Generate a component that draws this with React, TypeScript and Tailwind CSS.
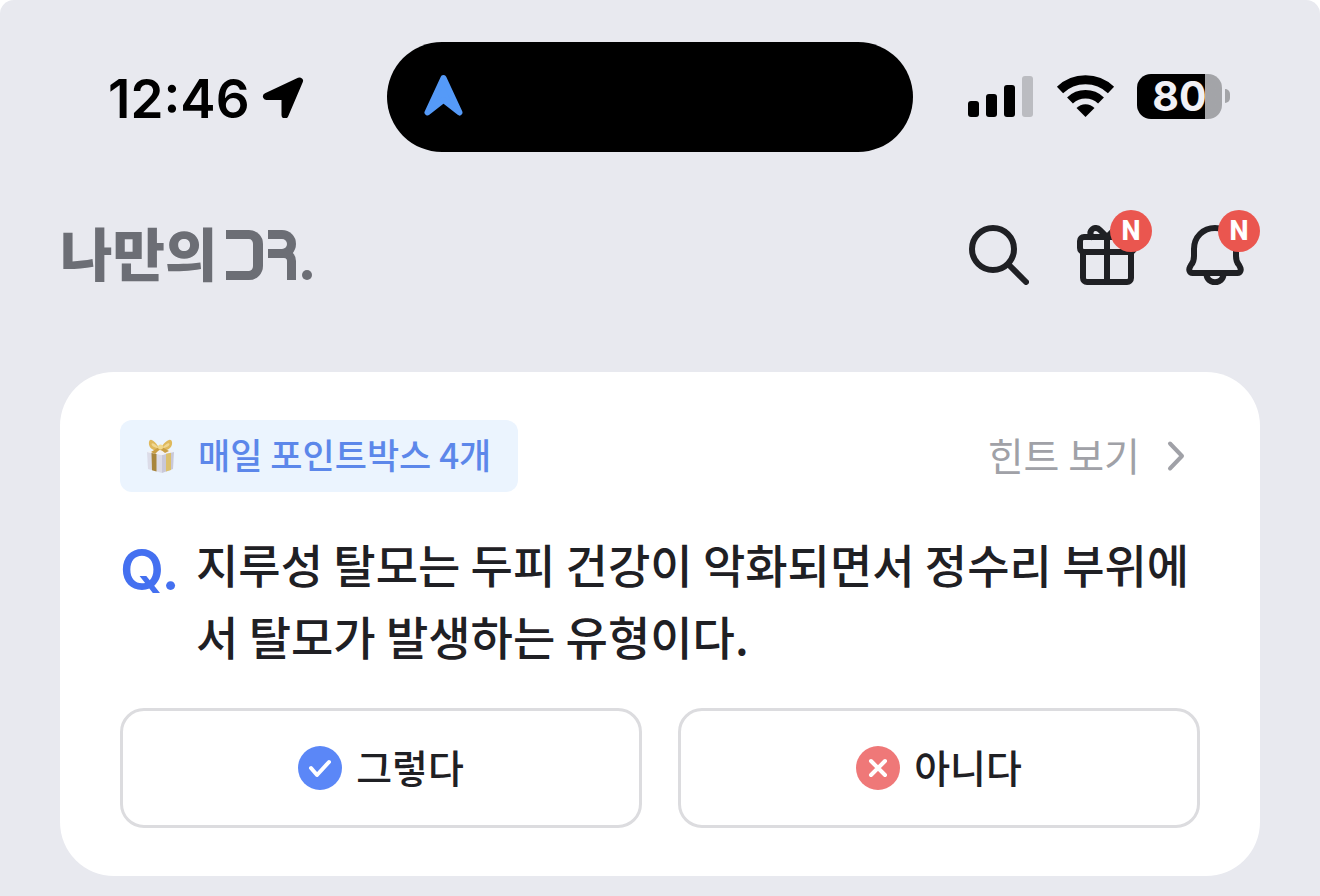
import type { ReactNode } from "react";

const signalBars = [
  { height: "h-4", color: "bg-black" },
  { height: "h-[23px]", color: "bg-black" },
  { height: "h-8", color: "bg-black" },
  { height: "h-[41px]", color: "bg-[#bbbcc1]" },
];

const StatusBar = () => (
  <div className="flex items-center pl-[108px] pr-[90px] pt-[42px] font-['Inter',sans-serif]">
    <div className="flex w-[279px] shrink-0 items-center gap-3">
      <span className="pt-1 text-[53px] leading-[60px] font-semibold text-black">12:46</span>
      <svg className="h-[42px] w-[42px]" viewBox="0 0 42 42" aria-hidden="true">
        <path
          d="M37.500 5 L4.500 20.500 L23 20.500 L23 39 Z"
          fill="#000"
          stroke="#000"
          strokeWidth="7"
          strokeLinejoin="round"
        />
      </svg>
    </div>

    {/* Dynamic island */}
    <div className="mr-[55px] flex h-[110px] grow items-center rounded-[55px] bg-black pb-1 pl-[37px]">
      <svg className="h-[42px] w-[40px]" viewBox="0 0 40 42" aria-hidden="true">
        <path
          d="M19.500 4 L3.500 38.500 L19.500 26 L35.500 38.500 Z"
          fill="#559af8"
          stroke="#559af8"
          strokeWidth="6"
          strokeLinejoin="round"
        />
      </svg>
    </div>

    <div className="flex shrink-0 items-center pb-0.5">
      <div className="flex items-end gap-[7px]">
        {signalBars.map((bar, index) => (
          <span key={index} className={`w-[11px] rounded-[3px] ${bar.height} ${bar.color}`} />
        ))}
      </div>
      <svg className="ml-[23px] h-[43px] w-[59px]" viewBox="0 0 59 43" aria-hidden="true">
        <path d="M4 15 A37 37 0 0 1 55 15" fill="none" stroke="#000" strokeWidth="9" />
        <path d="M14 25.500 A22.500 22.500 0 0 1 45 25.500" fill="none" stroke="#000" strokeWidth="8.500" />
        <path d="M20.500 33 A12.500 12.500 0 0 1 38.500 33 L29.500 42 Z" fill="#000" />
      </svg>
      <div className="ml-[22px] flex items-center gap-[3px]">
        <div className="flex h-[45px] w-[85px] items-center justify-center rounded-[14px] bg-linear-to-r from-black from-80% to-[#a3a4a8] to-80%">
          <span className="text-[41px] leading-[45px] font-bold text-[#f1f1f5]">80</span>
        </div>
        <span className="h-[14px] w-[5px] rounded-r-full bg-[#a3a4a8]" />
      </div>
    </div>
  </div>
);

const Logo = () => (
  <a href="#home" aria-label="나만의 DR." className="flex items-center text-[#6c6e75]">
    <span className="pb-2 text-[57px] leading-[52px] font-black">나만의</span>
    <span className="ml-[9px] flex h-[50px] items-stretch" aria-hidden="true">
      <span className="w-[37px] rounded-r-[14px] border-y-[9px] border-r-[10px] border-current" />
      <span className="ml-[5px] flex w-[28px] flex-col">
        <span className="h-[28px] rounded-r-[14px] border-y-[9px] border-r-[9px] border-current" />
        <span className="-mt-[9px] h-[31px] w-[28px] rounded-tr-[12px] border-t-[9px] border-r-[9px] border-current" />
      </span>
      <span className="ml-[6px] h-[10px] w-[10px] self-end rounded-full bg-current" />
    </span>
  </a>
);

type IconButtonProps = { label: string; isNew?: boolean; children: ReactNode };

const IconButton = ({ label, isNew, children }: IconButtonProps) => (
  <button type="button" aria-label={label} className="relative h-[60px] w-[60px] cursor-pointer text-[#1f2024]">
    <svg
      className="h-[60px] w-[60px]"
      viewBox="0 0 60 60"
      fill="none"
      stroke="currentColor"
      strokeWidth="6"
      strokeLinecap="round"
      strokeLinejoin="round"
    >
      {children}
    </svg>
    {isNew && (
      <span className="absolute -top-[15px] -right-[15px] flex h-[42px] w-[42px] items-center justify-center rounded-full bg-[#ea564f] font-['Roboto',sans-serif] text-[27px] leading-[42px] font-extrabold text-white">
        N
      </span>
    )}
  </button>
);

const Header = () => (
  <header className="mt-[73px] flex items-center justify-between pl-[60px] pr-[75px]">
    <Logo />
    <nav className="flex gap-12">
      <IconButton label="검색">
        <circle cx="24" cy="24" r="21" />
        <path d="M39.500 39.500 L57 57" />
      </IconButton>
      <IconButton label="선물" isNew>
        <rect x="3" y="12" width="54" height="15" rx="4" />
        <path d="M6 27 V53 a4 4 0 0 0 4 4 H50 a4 4 0 0 0 4 -4 V27" />
        <path d="M30 12 V57" />
        <path d="M30 12 L23 5 C18 0 11 5 14.500 12 M30 12 L37 5 C42 0 49 5 45.500 12" />
      </IconButton>
      <IconButton label="알림" isNew>
        <path d="M30 3 C18 3 9 12 9 24 V31 C9 35 8 38 6 40 L5 42 C3.500 44.500 4.500 48 7.500 48 H52.500 C55.500 48 56.500 44.500 55 42 L54 40 C52 38 51 35 51 31 V24 C51 12 42 3 30 3 Z" />
        <path d="M21.500 49 C22 60 38 60 38.500 49" />
      </IconButton>
    </nav>
  </header>
);

const GiftBox = () => (
  <svg className="h-9 w-[30px]" viewBox="0 0 30 36" aria-hidden="true">
    <path d="M1 14 L16 17 V35 L2 31 Z" fill="#dcdce8" />
    <path d="M16 17 L28 14 L27 31 L16 35 Z" fill="#c9c8d8" />
    <path d="M1 14 L14 10 L28 13 L16 17 Z" fill="#f3f1f2" />
    <path d="M5.500 15 L10.500 16 V33.500 L6 32.200 Z" fill="#a8853c" />
    <path d="M20 15.800 L25 14.700 V32 L20 33.500 Z" fill="#dcc06c" />
    <path d="M14 11 C9 3 4 -1 3 4 C2 10 8 14 14 12 C20 14 27 10 26 4 C25 -1 19 3 14 11 Z" fill="#dfb95c" />
    <path d="M13 10 C9 6 6 4 5.500 6 C5.500 8 9 10 13 10 M16 10 C20 6 23 4 23.500 6 C23.500 8 20 10 16 10" fill="#f0d792" />
    <path d="M13 9 L5 14 L9 16 L14 11 L19 15 L23 13 L16 9 Z" fill="#ca9f45" />
    <circle cx="14.500" cy="9" r="2.500" fill="#f1d98e" />
  </svg>
);

const QuizCard = () => (
  <main className="mx-[60px] mt-[87px] rounded-[54px] bg-white px-[60px] py-12">
    <div className="flex items-center justify-between">
      <div className="flex h-[72px] items-center gap-[22px] rounded-xl bg-[#ebf4fe] pl-[26px] pr-[27px]">
        <GiftBox />
        <span className="pb-1 text-[35px] leading-[48px] font-medium text-[#5c87ea]">매일 포인트박스 4개</span>
      </div>
      <a href="#hint" className="flex items-center gap-3 text-[39px] leading-[60px] text-[#a0a1a7]">
        <span className="pb-1">힌트 보기</span>
        <svg className="h-12 w-12" viewBox="0 0 48 48" fill="none" aria-hidden="true">
          <path
            d="M18 11.500 L30 24 L18 36.500"
            stroke="currentColor"
            strokeWidth="4"
            strokeLinecap="round"
            strokeLinejoin="round"
          />
        </svg>
      </a>
    </div>

    <div className="mt-[35px] flex">
      <span className="w-[76px] shrink-0 font-['Inter',sans-serif] text-[57px] leading-[86px] font-semibold text-[#4470f0]">
        Q.
      </span>
      <p className="text-[46px] leading-[72px] font-medium text-[#1f2024]">
        지루성 탈모는 두피 건강이 악화되면서 정수리 부위에서 탈모가 발생하는 유형이다.
      </p>
    </div>

    <div className="mt-[37px] grid grid-cols-2 gap-9">
      <AnswerButton label="그렇다" color="bg-[#5b87f7]">
        <path d="M13 22 L19 29 L31 16" />
      </AnswerButton>
      <AnswerButton label="아니다" color="bg-[#ef7878]">
        <path d="M15 15 L29 29 M29 15 L15 29" />
      </AnswerButton>
    </div>
  </main>
);

type AnswerButtonProps = { label: string; color: string; children: ReactNode };

const AnswerButton = ({ label, color, children }: AnswerButtonProps) => (
  <button
    type="button"
    className="flex h-[120px] cursor-pointer items-center justify-center gap-[14px] rounded-3xl border-[3px] border-[#dcdcdf] bg-white text-[39px] leading-[60px] font-medium text-[#1f2024]"
  >
    <svg
      className={`h-11 w-11 rounded-full ${color}`}
      viewBox="0 0 44 44"
      fill="none"
      stroke="#fff"
      strokeWidth="4"
      strokeLinecap="round"
      strokeLinejoin="round"
      aria-hidden="true"
    >
      {children}
    </svg>
    <span className="pb-1">{label}</span>
  </button>
);

const App = () => {
  return (
    <div className="min-h-screen rounded-t-[14px] bg-[#e8e9ef] pb-5 font-['Noto_Sans_CJK_KR',sans-serif]">
      <StatusBar />
      <Header />
      <QuizCard />
    </div>
  );
};

export default App;
